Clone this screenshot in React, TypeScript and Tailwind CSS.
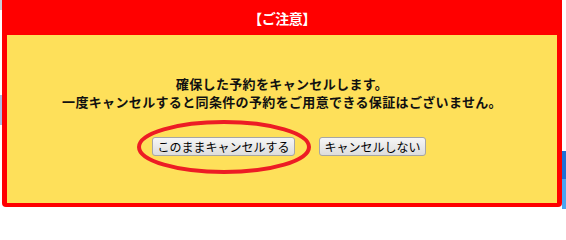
import React from "react";

export default function App() {
  const jp = { fontFamily: '"Noto Sans CJK JP", "Noto Sans", sans-serif' };
  return (
    <div className="relative w-[566px] h-[209px] bg-white overflow-hidden flex" style={jp}>
      <div className="w-[2px] h-full flex flex-col">
        <div className="h-[10px] bg-[#c7cdd8]" />
        <div className="h-[85px] bg-white" />
        <div className="h-[30px] bg-[#a9bde6]" />
        <div className="flex-1 bg-white" />
      </div>
      <div className="w-[560px] h-[207px] bg-[#ff0000] rounded-b-[4px] flex flex-col">
        <div className="h-[35px] flex items-center justify-center text-white font-bold text-[14px] leading-none tracking-[-0.5px] pt-[1px]">
          【ご注意】
        </div>
        <div className="mx-[5px] h-[168px] bg-[#fee05a] flex flex-col items-center pt-[40px]">
          <div className="text-center text-[13px] leading-[18px] font-bold tracking-[0.35px] text-[#111]">
            <div>確保した予約をキャンセルします。</div>
            <div>一度キャンセルすると同条件の予約をご用意できる保証はございません。</div>
          </div>
          <div className="flex gap-[24px] mt-[26px] pl-[14px]">
            <button className="w-[143px] h-[19px] border border-[#a6a6a6] rounded-[3px] bg-gradient-to-b from-[#f6f6f6] to-[#dddddd] text-[12px] leading-none text-black">
              このままキャンセルする
            </button>
            <button className="w-[107px] h-[19px] border border-[#a6a6a6] rounded-[3px] bg-gradient-to-b from-[#f6f6f6] to-[#dddddd] text-[12px] leading-none text-black">
              キャンセルしない
            </button>
          </div>
        </div>
      </div>
      <div className="w-[4px] h-full flex flex-col">
        <div className="h-[151px] bg-white" />
        <div className="h-[28px] bg-[#1f6fd6]" />
        <div className="flex-1 bg-[#4aa6f2]" />
      </div>
      <svg className="absolute left-[137px] top-[120px]" width="174" height="54" viewBox="0 0 174 54">
        <ellipse cx="87" cy="27" rx="85" ry="25" fill="none" stroke="#ed1c24" strokeWidth="4" />
      </svg>
    </div>
  );
}
